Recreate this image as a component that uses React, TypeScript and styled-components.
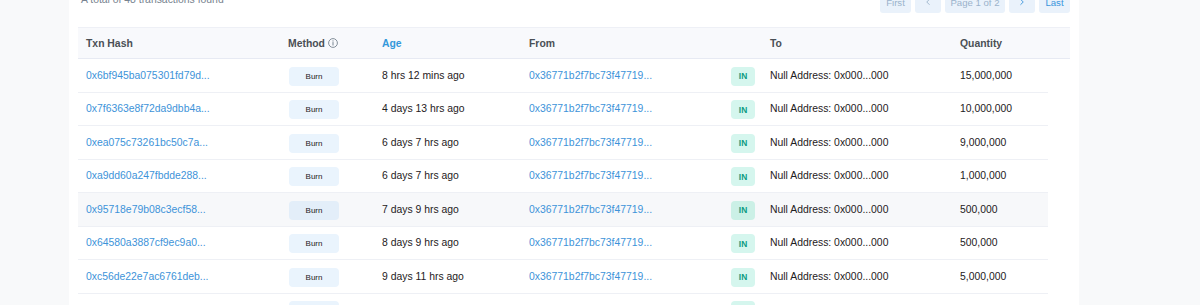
import styled, { createGlobalStyle } from "styled-components";
import { ChevronLeft, ChevronRight } from "lucide-react";

const GlobalStyle = createGlobalStyle`
  html, body {
    margin: 0;
    padding: 0;
    background: #f8f9fa;
    font-family: "Liberation Sans", Arial, sans-serif;
    overflow: hidden;
  }
`;

const Page = styled.div`
  width: 1200px;
  height: 305px;
  padding-left: 69px;
  box-sizing: border-box;
  overflow: hidden;
`;

const Card = styled.div`
  width: 1010px;
  margin-top: -7px;
  padding: 0 9px 20px;
  box-sizing: border-box;
  background: #ffffff;
`;

const TopBar = styled.div`
  display: flex;
  align-items: flex-end;
  justify-content: space-between;
  height: 19px;
`;

const Total = styled.span`
  align-self: center;
  font-size: 10.4px;
  color: #77838f;
  margin-left: 3px;
  margin-top: -6px;
`;

const Pager = styled.div`
  display: flex;
  gap: 4px;
  margin-bottom: -0.5px;
`;

const PageButton = styled.span<{ $enabled?: boolean; $w: number }>`
  display: flex;
  align-items: center;
  justify-content: center;
  height: 21px;
  width: ${({ $w }) => $w}px;
  box-sizing: border-box;
  border-radius: 3px;
  background: #eaf2fb;
  font-size: 9.6px;
  color: ${({ $enabled }) => ($enabled ? "#3a95dc" : "#9bb3cb")};
`;

const HeadRow = styled.div`
  display: grid;
  grid-template-columns: 202px 94px 147px 202px 39px 190px 1fr;
  align-items: center;
  height: 32px;
  margin-top: 15px;
  background: #f8f9fc;
  border-top: 1px solid #eef0f6;
  border-bottom: 1px solid #e7eaf3;
  box-sizing: border-box;
`;

const HeadCell = styled.div<{ $active?: boolean }>`
  display: flex;
  align-items: center;
  gap: 3px;
  padding-left: 8px;
  font-size: 10.4px;
  font-weight: 700;
  color: ${({ $active }) => ($active ? "#3498db" : "#4a4f55")};
`;

const Body = styled.div`
  margin-right: 22px;
`;

const Row = styled.div<{ $hover?: boolean }>`
  display: grid;
  grid-template-columns: 202px 94px 147px 202px 39px 190px 1fr;
  align-items: center;
  height: 33.5px;
  box-sizing: border-box;
  border-bottom: 1px solid #eef0f5;
  background: ${({ $hover }) => ($hover ? "#f7f8fa" : "#ffffff")};
`;

const Cell = styled.div`
  padding-left: 8px;
  font-size: 10.4px;
  color: #1e2022;
  white-space: nowrap;
  overflow: hidden;
`;

const LinkCell = styled(Cell)`
  color: #3d93d9;
`;

const MethodBadge = styled.span<{ $hover?: boolean }>`
  display: inline-flex;
  align-items: center;
  justify-content: center;
  width: 50px;
  height: 19px;
  margin-left: 1px;
  margin-top: 2px;
  border-radius: 4px;
  background: ${({ $hover }) => ($hover ? "#e3eef9" : "#eaf4fd")};
  font-size: 8px;
  color: #1e2022;
`;

const InBadge = styled.span<{ $hover?: boolean }>`
  display: inline-flex;
  align-items: center;
  justify-content: center;
  width: 24px;
  height: 19px;
  margin-top: 2px;
  border-radius: 4px;
  background: ${({ $hover }) => ($hover ? "#cbf0e6" : "#d5f6ee")};
  font-size: 8.4px;
  font-weight: 700;
  color: #0c9a82;
`;

const BadgeCell = styled.div`
  display: flex;
  padding-left: 8px;
`;

function InfoIcon() {
  return (
    <svg width="10" height="10" viewBox="0 0 10 10">
      <circle cx="5" cy="5" r="4.4" fill="none" stroke="#77838f" strokeWidth="0.9" />
      <circle cx="5" cy="2.9" r="0.6" fill="#77838f" />
      <rect x="4.5" y="4.1" width="1" height="3.4" fill="#77838f" />
    </svg>
  );
}

const rows = [
  { hash: "0x6bf945ba075301fd79d...", age: "8 hrs 12 mins ago", qty: "15,000,000" },
  { hash: "0x7f6363e8f72da9dbb4a...", age: "4 days 13 hrs ago", qty: "10,000,000" },
  { hash: "0xea075c73261bc50c7a...", age: "6 days 7 hrs ago", qty: "9,000,000" },
  { hash: "0xa9dd60a247fbdde288...", age: "6 days 7 hrs ago", qty: "1,000,000" },
  { hash: "0x95718e79b08c3ecf58...", age: "7 days 9 hrs ago", qty: "500,000", hover: true },
  { hash: "0x64580a3887cf9ec9a0...", age: "8 days 9 hrs ago", qty: "500,000" },
  { hash: "0xc56de22e7ac6761deb...", age: "9 days 11 hrs ago", qty: "5,000,000" },
  { hash: "0x1d2c9a8e4f0b7735ae...", age: "10 days 2 hrs ago", qty: "2,000,000" },
];

export default function App() {
  return (
    <>
      <GlobalStyle />
      <Page>
        <Card>
          <TopBar>
            <Total>A total of 48 transactions found</Total>
            <Pager>
              <PageButton $w={31}>First</PageButton>
              <PageButton $w={26}>
                <ChevronLeft size={10} strokeWidth={2.2} />
              </PageButton>
              <PageButton $w={60}>Page 1 of 2</PageButton>
              <PageButton $w={26} $enabled>
                <ChevronRight size={10} strokeWidth={2.2} />
              </PageButton>
              <PageButton $w={31} $enabled>
                Last
              </PageButton>
            </Pager>
          </TopBar>
          <HeadRow>
            <HeadCell>Txn Hash</HeadCell>
            <HeadCell>
              Method <InfoIcon />
            </HeadCell>
            <HeadCell $active>Age</HeadCell>
            <HeadCell>From</HeadCell>
            <HeadCell />
            <HeadCell>To</HeadCell>
            <HeadCell>Quantity</HeadCell>
          </HeadRow>
          <Body>
            {rows.map((r) => (
              <Row key={r.hash} $hover={r.hover}>
                <LinkCell>{r.hash}</LinkCell>
                <BadgeCell>
                  <MethodBadge $hover={r.hover}>Burn</MethodBadge>
                </BadgeCell>
                <Cell>{r.age}</Cell>
                <LinkCell>0x36771b2f7bc73f47719...</LinkCell>
                <BadgeCell>
                  <InBadge $hover={r.hover}>IN</InBadge>
                </BadgeCell>
                <Cell>Null Address: 0x000...000</Cell>
                <Cell>{r.qty}</Cell>
              </Row>
            ))}
          </Body>
        </Card>
      </Page>
    </>
  );
}
